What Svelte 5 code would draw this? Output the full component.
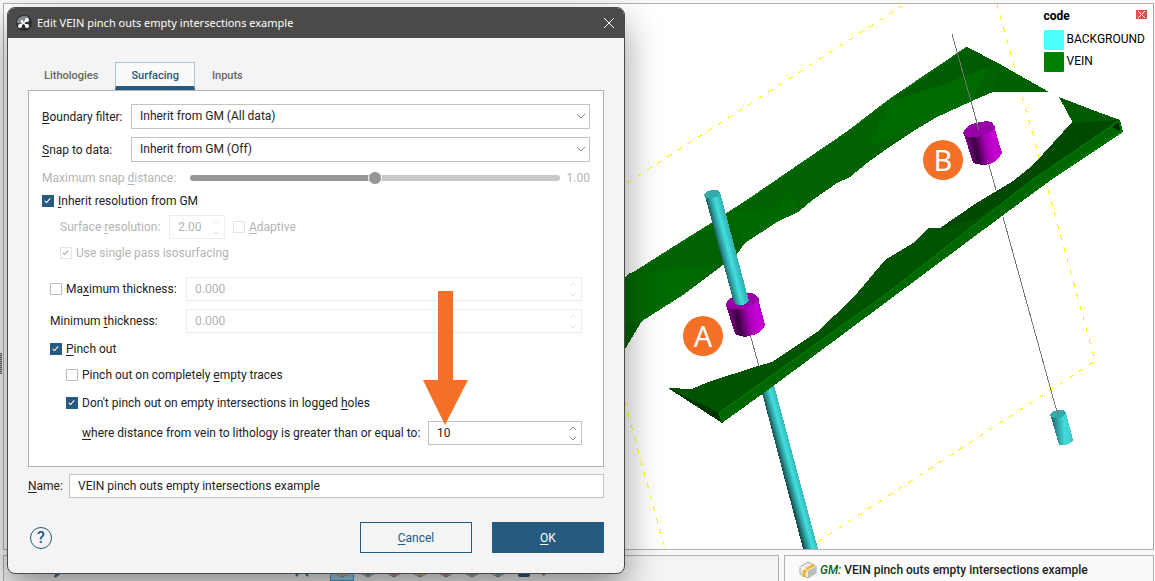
<!--
  VeinEditor: 3D scene view with the vein settings dialog open over it.
-->
<script>
  let boundaryFilter = $state("all");
  let snapToData = $state("off");
  let snapDistance = $state(50);
  let inheritResolution = $state(true);
  let adaptive = $state(false);
  let singlePass = $state(true);
  let limitThickness = $state(false);
  let pinchOut = $state(true);
  let emptyTraces = $state(false);
  let keepLogged = $state(true);
  let distance = $state("10");
  let name = $state("VEIN pinch outs empty intersections example");

  const tabs = ["Lithologies", "Surfacing", "Inputs"];
  let activeTab = $state("Surfacing");

  const legend = [
    { label: "BACKGROUND", color: "#4dffff" },
    { label: "VEIN", color: "#008000" },
  ];

  // top face colours of the toolbar cubes
  const cubes = ["#e0b030", "#4a90b8", "#d9534f", "#e0b030", "#d9534f", "#5aa88a", "#4a90b8"];
</script>

{#snippet spinner(id, value, disabled)}
  <span class="spin" class:disabled>
    <input {id} type="text" inputmode="decimal" {value} {disabled} />
    <span class="steps">
      <button type="button" aria-label="Increase" {disabled}>
        <svg viewBox="0 0 8 5" width="8" height="5"><path d="M1 4l3-3 3 3" /></svg>
      </button>
      <button type="button" aria-label="Decrease" {disabled}>
        <svg viewBox="0 0 8 5" width="8" height="5"><path d="M1 1l3 3 3-3" /></svg>
      </button>
    </span>
  </span>
{/snippet}

<main class="app">
  <section class="scene">
    <svg class="view" viewBox="4 4 1149 545" preserveAspectRatio="xMinYMin slice" aria-hidden="true">
      <defs>
        <linearGradient id="cyan" x1="0" y1="0.1" x2="1" y2="0">
          <stop offset="0" stop-color="#1c6060" />
          <stop offset="0.2" stop-color="#2a9292" />
          <stop offset="0.55" stop-color="#41d9d9" />
          <stop offset="0.8" stop-color="#3fd3d3" />
          <stop offset="1" stop-color="#2fa0a0" />
        </linearGradient>
        <linearGradient id="pole" gradientUnits="userSpaceOnUse" x1="706" y1="198" x2="720" y2="194.4">
          <stop offset="0" stop-color="#1c6060" />
          <stop offset="0.3" stop-color="#2fa8a8" />
          <stop offset="0.6" stop-color="#43dede" />
          <stop offset="1" stop-color="#34b4b4" />
        </linearGradient>
        <linearGradient id="poleLow" gradientUnits="userSpaceOnUse" x1="761" y1="391" x2="775" y2="387.2">
          <stop offset="0" stop-color="#164c4c" />
          <stop offset="0.3" stop-color="#2c9c9c" />
          <stop offset="0.6" stop-color="#43dede" />
          <stop offset="1" stop-color="#34b4b4" />
        </linearGradient>
        <linearGradient id="purple" x1="0" y1="0.2" x2="1" y2="0">
          <stop offset="0.08" stop-color="#6a0072" />
          <stop offset="0.22" stop-color="#3a0040" />
          <stop offset="0.5" stop-color="#a800b6" />
          <stop offset="0.72" stop-color="#c800d8" />
          <stop offset="1" stop-color="#a000ae" />
        </linearGradient>
      </defs>

      <g shape-rendering="crispEdges">
        <g class="bounds">
          <path d="M627 183L902 6" />
          <path d="M997 4L1095 361L816 543" />
          <path d="M625 402L665 549" />
        </g>

        <!-- upper vein surface -->
        <path
          fill="#006200"
          d="M620 282L630 274L672 248L712 223L749 199L800 164L847 132L890 99L967 47L998 63L1049 92H993L972 101L935 118L912 132L885 150L867 163L850 177L837 183L814 199L798 212L777 222L755 235L745 243L737 254L723 265L683 295L642 321L625 349L620 354Z"
        />
        <path fill="#006a00" d="M630 273L700 268L722 262L683 295L642 321L620 325V281Z" />
        <path fill="#006800" d="M727 213L780 207L790 186L798 212L777 222L745 243L728 220Z" />
        <path fill="#006a00" d="M890 100L950 80L990 63L972 101L935 118L885 142L868 145Z" />
        <path fill="#005a00" d="M967 47L998 63L945 84L895 99Z" />
        <path fill="#006000" d="M998 63L1049 92H993Z" />
        <path fill="none" stroke="#007a00" d="M625 278L672 248L712 223L749 199L800 164L847 132L890 99L967 47" />

        <path class="trace" d="M750 334L760 370" />
        <path fill="url(#poleLow)" d="M760 385H774L818 549H803Z" />

        <!-- lower vein surface -->
        <path
          fill="#005400"
          d="M668 388L692 389L708 382L758 366L772 362L817 332L853 298L885 260L913 243L928 228H940L975 204L1013 181L1033 165L1073 121L1059 97L1098 112L1120 120L1123 132L1051 180L1002 216L885 303L772 387L722 423Z"
        />
        <path fill="#004900" d="M940 228L975 204L1013 181L1033 165L1073 121L1118 120L1034 180L1003 203L975 219L933 232Z" />
        <path fill="#005a00" d="M1059 97L1098 112L1120 120L1073 123Z" />
        <path fill="#003300" d="M668 388L719 413L722 423Z" />
        <path fill="#006600" d="M719 413L885 295L1032 180L1118 121L1123 132L1051 180L1002 216L885 303L772 387L722 423Z" />
        <path fill="none" stroke="#007c00" d="M722 422L719 413L885 295L1032 180L1119 121L1122 131L1051 179" />
        <path fill="#002800" d="M1112 127L1119 122L1120 131Z" />

        <path class="trace" d="M952 34L996 190M1003 217L1057 412" />

        <!-- intersection A -->
        <path fill="url(#purple)" d="M726 305L735 334Q744 339 753 335Q762 333 765 325L758 298Z" />
        <path fill="#9a00a8" d="M726 304Q728 298 736 296Q748 291 755 294L759 299Q757 304 748 306Q734 312 728 308Z" />
        <path fill="url(#pole)" d="M705 196L734 303Q742 308 749 301L720 192Z" />
        <ellipse cx="712" cy="194" rx="8" ry="4" fill="#34aaaa" transform="rotate(-10 712 194)" />

        <!-- intersection B -->
        <path fill="url(#purple)" d="M964 134L973 163Q982 166 990 164Q998 161 1002 153L994 126Z" />
        <path fill="#9a00a8" d="M963 133Q965 127 972 124Q984 120 992 122L995 127Q991 133 984 135Q971 139 965 136Z" />
        <path class="trace" d="M975 117L979 130" />

        <path fill="url(#cyan)" d="M1051 417L1059 445Q1068 447 1073 440L1066 413Z" />
        <ellipse cx="1058" cy="414" rx="8" ry="4" fill="#34aaaa" transform="rotate(-12 1058 414)" />
        <path stroke="#907070" d="M1057 410V413" />
      </g>

      <g class="badge">
        <circle cx="703" cy="336" r="20" />
        <text x="703" y="347">A</text>
        <circle cx="943" cy="160" r="20" />
        <text x="943" y="171">B</text>
      </g>
    </svg>

    <aside class="legend">
      <header>
        <strong>code</strong>
        <button type="button" aria-label="Close legend">
          <svg viewBox="0 0 11 9" width="11" height="9"><path d="M2 1l7 7M9 1l-7 7" /></svg>
        </button>
      </header>
      <ul>
        {#each legend as item}
          <li><i style:background={item.color}></i>{item.label}</li>
        {/each}
      </ul>
    </aside>
  </section>

  <footer class="bars">
    <div class="toolbar">
      <svg class="pen" viewBox="0 0 20 20" width="20" height="20"><path d="M5 18l3-6 7-8 2 2-7 8z" /></svg>
      <svg class="pen up" viewBox="0 0 20 20" width="20" height="20"><path d="M4 17l6-7 6 7" /></svg>
      <div class="cubes">
        {#each cubes as color, i}
          <span class="tool" class:selected={i === 0}>
            <svg viewBox="0 0 20 20" width="20" height="20">
              <path fill="#e8e8e8" stroke="#808890" d="M2 6l8-4 8 4v8l-8 4-8-4z" />
              <path fill={color} d="M10 9l5 5-5 3-5-3z" />
              <path fill="none" stroke="#808890" d="M10 9v9" />
            </svg>
          </span>
        {/each}
        <span class="tool">
          <svg viewBox="0 0 20 20" width="20" height="20"><rect x="4" y="3" width="12" height="15" rx="2" fill="#255b80" /></svg>
        </span>
        <svg class="pen" viewBox="0 0 20 20" width="20" height="20"><path d="M5 18l3-6 7-8 2 2-7 8z" /></svg>
      </div>
    </div>
    <div class="status">
      <svg viewBox="0 0 18 18" width="18" height="18" aria-hidden="true">
        <path fill="#ececec" stroke="#a8a8a8" d="M1 6l8-5 8 4v7l-8 5-8-4z" />
        <path fill="#bdbdbd" d="M9 9l8-4v7l-8 5z" />
        <path fill="none" stroke="#f5b21a" stroke-width="3" d="M15 4l-7 4-3 3v5" />
        <path fill="none" stroke="#fff" d="M1 6l8 3 8-4" opacity="0.7" />
      </svg>
      <span><em>GM:</em> VEIN pinch outs empty intersections example</span>
    </div>
  </footer>

  <div class="splitter"></div>

  <form class="dialog" aria-label="Edit VEIN" onsubmit={(e) => e.preventDefault()}>
    <header class="titlebar">
      <svg viewBox="0 0 16 16" width="16" height="16" aria-hidden="true">
        <circle cx="8" cy="8" r="8" fill="#2b2d30" />
        <path fill="#85888a" d="M1 8a7 7 0 0 1 12-5L6 9z" />
        <path stroke="#fff" stroke-width="1.5" d="M4 11l8-7M5 6l6 5" />
        <g fill="#fff"><circle cx="4" cy="11" r="2" /><circle cx="11" cy="5" r="2" /><circle cx="11" cy="11" r="2" /><circle cx="6" cy="6" r="1" /></g>
      </svg>
      <h1>Edit VEIN pinch outs empty intersections example</h1>
      <button type="button" aria-label="Close">
        <svg viewBox="0 0 12 12" width="12" height="12"><path d="M1 1l10 10M11 1L1 11" /></svg>
      </button>
    </header>

    <div class="body">
      <nav class="tabs">
        {#each tabs as tab}
          <button type="button" class:active={tab === activeTab} onclick={() => (activeTab = tab)}>{tab}</button>
        {/each}
      </nav>

      <div class="pane">
        <div class="row combo">
          <label for="boundary"><u>B</u>oundary filter:</label>
          <span class="select">
            <select id="boundary" bind:value={boundaryFilter}>
              <option value="all">Inherit from GM (All data)</option>
            </select>
            <svg viewBox="0 0 10 6" width="10" height="6"><path d="M1 1l4 4 4-4" /></svg>
          </span>
        </div>
        <div class="row combo">
          <label for="snap"><u>S</u>nap to data:</label>
          <span class="select">
            <select id="snap" bind:value={snapToData}>
              <option value="off">Inherit from GM (Off)</option>
            </select>
            <svg viewBox="0 0 10 6" width="10" height="6"><path d="M1 1l4 4 4-4" /></svg>
          </span>
        </div>
        <div class="row slider off">
          <label for="maxsnap">Maximum snap <u>d</u>istance:</label>
          <input id="maxsnap" type="range" min="0" max="100" bind:value={snapDistance} disabled />
          <output for="maxsnap">1.00</output>
        </div>

        <label class="check">
          <input type="checkbox" bind:checked={inheritResolution} /><span><u>I</u>nherit resolution from GM</span>
        </label>
        <div class="row resolution off">
          <label for="resolution">Surface <u>r</u>esolution:</label>
          {@render spinner("resolution", "2.00", true)}
          <label class="check">
            <input type="checkbox" bind:checked={adaptive} disabled /><span><u>A</u>daptive</span>
          </label>
        </div>
        <label class="check single off">
          <input type="checkbox" bind:checked={singlePass} disabled /><span>Use single pass isosurfacing</span>
        </label>

        <div class="group">
          <div class="row thickness">
            <label class="check">
              <input type="checkbox" bind:checked={limitThickness} /><span>Ma<u>x</u>imum thickness:</span>
            </label>
            {@render spinner("maxthick", "0.000", true)}
          </div>
          <div class="row thickness">
            <label for="minthick">Minimum <u>t</u>hickness:</label>
            {@render spinner("minthick", "0.000", true)}
          </div>
          <label class="check">
            <input type="checkbox" bind:checked={pinchOut} /><span><u>P</u>inch out</span>
          </label>
          <div class="nested">
            <label class="check">
              <input type="checkbox" bind:checked={emptyTraces} /><span>Pinch out on completely <u>e</u>mpty traces</span>
            </label>
            <label class="check">
              <input type="checkbox" bind:checked={keepLogged} /><span>Don't pinch out on empty intersections in logged <u>h</u>oles</span>
            </label>
            <div class="row distance">
              <label for="distance"><u>w</u>here distance from vein to lithology is greater than or equal to:</label>
              {@render spinner("distance", distance, false)}
            </div>
          </div>
        </div>
      </div>

      <div class="row name">
        <label for="name"><u>N</u>ame:</label>
        <input id="name" type="text" bind:value={name} />
      </div>

      <div class="actions">
        <button type="button" class="help" aria-label="Help">?</button>
        <button type="button" class="btn"><u>C</u>ancel</button>
        <button type="submit" class="btn primary"><u>O</u>K</button>
      </div>
    </div>

    <svg class="pointer" viewBox="0 0 46 134" width="46" height="134" aria-hidden="true">
      <path d="M15 0h15v89h15L22 134 0 89h15z" />
    </svg>
  </form>
</main>

<style>
  :global(body) {
    margin: 0;
    background: #f8f8f8;
  }
  .app {
    --blue: #255b80;
    --line: #c3c3c3;
    --faint: #ececec;
    position: relative;
    box-sizing: border-box;
    min-height: 100vh;
    display: flex;
    flex-direction: column;
    gap: 5px;
    padding: 3px 1px 0 3px;
    overflow: hidden;
    font: 12px/16px Roboto, "Liberation Sans", sans-serif;
    color: #222;
  }
  button, input, select {
    margin: 0;
    padding: 0;
    font: inherit;
    color: inherit;
  }
  u {
    text-decoration-thickness: 1px;
    text-underline-offset: 2px;
    text-decoration-skip-ink: none;
  }

  /* ---- scene ---- */
  .scene {
    position: relative;
    flex: 1;
    background: #fff;
    border: 1px solid #b0b0b0;
    border-right-color: #9aa3ab;
  }
  .view {
    position: absolute;
    inset: 0;
    width: 100%;
    height: 100%;
  }
  .bounds path {
    fill: none;
    stroke: #ffff00;
    stroke-dasharray: 5 7;
  }
  .trace {
    fill: none;
    stroke: #777;
  }
  .badge circle { fill: #f37026; }
  .badge text {
    fill: #fff;
    font: 29px "Noto Sans", sans-serif;
    text-anchor: middle;
  }

  .legend {
    position: absolute;
    top: 4px;
    right: 6px;
    color: #000;
  }
  .legend header {
    display: flex;
    align-items: flex-start;
    justify-content: space-between;
    height: 22px;
  }
  .legend header button {
    display: flex;
    margin-top: 2px;
    border: 0;
    background: #d9534f;
  }
  .legend header path {
    stroke: #fff;
  }
  .legend ul {
    display: flex;
    flex-direction: column;
    gap: 2px;
    margin: 0;
    padding: 0 2px 0 0;
    list-style: none;
  }
  .legend li {
    display: flex;
    gap: 3px;
    line-height: 18px;
  }
  .legend i {
    width: 20px;
    height: 20px;
    border-radius: 1px;
  }

  /* ---- bottom bars ---- */
  .bars {
    display: grid;
    grid-template-columns: 776fr 370fr;
    gap: 5px;
    height: 26px;
  }
  .toolbar, .status {
    box-sizing: border-box;
    display: flex;
    align-items: center;
    border: 1px solid #b0b0b0;
    border-bottom: 0;
    background: #fafafa;
  }
  .toolbar {
    padding-left: 46px;
    background: #f4f4f4;
  }
  .cubes {
    display: flex;
    gap: 2px;
    margin-left: 18px;
  }
  .tool {
    padding: 2px;
  }
  .tool.selected {
    background: #9fd0ea;
    box-shadow: inset 0 0 0 1px #3aa0d0;
  }
  .tool svg { display: block; }
  .pen path {
    fill: none;
    stroke: #3f6f90;
    stroke-width: 2;
  }
  .pen.up { margin-left: 222px; }
  .status {
    gap: 3px;
    padding: 3px 0 0 14px;
    font-weight: 500;
  }
  .status em { color: #106010; }

  .splitter {
    position: absolute;
    left: 0;
    top: 353px;
    width: 2px;
    height: 21px;
    background: repeating-linear-gradient(#666 0 1px, #bbb 1px 2px);
  }

  /* ---- dialog window ---- */
  .dialog {
    position: absolute;
    left: 7px;
    top: 7px;
    box-sizing: border-box;
    width: 618px;
    border: 1px solid #4c4a48;
    border-radius: 8px;
    background: #f4f4f4;
    box-shadow: 0 16px 36px rgba(0, 0, 0, 0.42);
  }
  .titlebar {
    display: flex;
    align-items: center;
    gap: 5px;
    height: 30px;
    padding: 0 9px 0 8px;
    border-radius: 7px 7px 0 0;
    background: #4c4a48;
    color: #fff;
  }
  .titlebar h1 {
    flex: 1;
    margin: 0;
    font: 11px/16px "Noto Sans", sans-serif;
  }
  .titlebar svg { fill: none; }
  .titlebar button {
    display: flex;
    border: 0;
    background: none;
  }
  .titlebar button path {
    stroke: #fff;
  }
  .body {
    padding: 24px 20px 20px;
  }

  .tabs {
    display: flex;
    gap: 1px;
    height: 28px;
  }
  .tabs button {
    box-sizing: border-box;
    padding: 3px 15px 0;
    border: 1px solid transparent;
    border-bottom: 4px solid transparent;
    background: none;
    color: #666;
    font-size: 11px;
    font-weight: 500;
  }
  .tabs button.active {
    border-color: #b0c4d0;
    border-bottom-color: var(--blue);
    background: #fafafa;
    color: var(--blue);
  }

  .pane {
    display: flex;
    flex-direction: column;
    padding: 13px 13px 21px;
    border: 1px solid #b0b0b0;
    background: #fff;
  }
  .row {
    display: flex;
    align-items: center;
  }
  .off { color: #b4b4b4; }

  .combo { margin-bottom: 8px; }
  .combo label { width: 89px; }
  .select {
    position: relative;
    flex: 1;
    display: flex;
  }
  .select select {
    flex: 1;
    height: 25px;
    padding: 0 8px 2px;
    border: 1px solid var(--line);
    border-radius: 0;
    background: #fff;
    appearance: none;
  }
  .select svg {
    position: absolute;
    right: 4px;
    top: 9px;
    fill: none;
    stroke: #888;
    pointer-events: none;
  }

  .slider {
    height: 16px;
    margin-bottom: 7px;
  }
  .slider label { width: 148px; }
  .slider output {
    width: 30px;
    text-align: right;
  }
  .slider input {
    flex: 1;
    min-width: 0;
    height: 6px;
    border-radius: 3px;
    background: linear-gradient(90deg, #969696 50%, #c8c8c8 50%);
    appearance: none;
  }
  .slider input::-webkit-slider-thumb {
    width: 14px;
    height: 14px;
    border: 1px solid #fff;
    border-radius: 50%;
    background: #969696;
    appearance: none;
  }

  .check {
    display: flex;
    align-items: center;
    gap: 4px;
    height: 16px;
  }
  .check input {
    position: relative;
    box-sizing: border-box;
    width: 12px;
    height: 12px;
    border: 1px solid #bbb;
    background: #fff;
    appearance: none;
  }
  .check input:checked {
    border-color: var(--blue);
    background: var(--blue);
  }
  .check input:disabled {
    border-color: #e4e4e4;
    background: #fff;
  }
  .check input:checked::after {
    content: "";
    position: absolute;
    left: 3px;
    top: 1px;
    width: 2px;
    height: 5px;
    border: solid #fff;
    border-width: 0 1px 1px 0;
    transform: rotate(42deg);
  }
  .check input:disabled::after { border-color: #aaa; }

  .spin {
    box-sizing: border-box;
    display: flex;
    flex: 1;
    height: 24px;
    border: 1px solid var(--line);
    background: #fff;
  }
  .spin input {
    flex: 1;
    width: 0;
    min-width: 0;
    padding-left: 8px;
    border: 0;
    background: none;
  }
  .steps {
    display: flex;
    flex-direction: column;
    justify-content: center;
    gap: 5px;
    width: 16px;
  }
  .steps button {
    display: flex;
    justify-content: center;
    border: 0;
    background: none;
  }
  .steps path {
    fill: none;
    stroke: #8a8a8a;
  }
  .spin.disabled {
    border-color: var(--faint);
    color: #b4b4b4;
  }
  .spin.disabled path { stroke: #e4e4e4; }

  .resolution {
    margin: 6px 0 6px 18px;
  }
  .resolution > label:first-child { width: 109px; }
  .resolution .spin { flex: 0 0 56px; }
  .resolution .check { margin-left: 8px; }
  .single { margin-left: 18px; }

  .group {
    display: flex;
    flex-direction: column;
    gap: 8px;
    padding: 16px 8px 0;
  }
  .thickness > label { width: 136px; }
  .nested {
    display: flex;
    flex-direction: column;
    gap: 12px;
    padding: 2px 0 0 16px;
  }
  .distance {
    margin-top: -2px;
    padding-left: 16px;
  }
  .distance .spin { flex: 0 0 154px; }
  .distance label { flex: 1; }

  .name {
    margin-top: 7px;
  }
  .name label { width: 41px; }
  .name input {
    box-sizing: border-box;
    flex: 1;
    height: 24px;
    padding: 0 8px;
    border: 1px solid var(--line);
    background: #fff;
  }

  .actions {
    display: flex;
    align-items: center;
    gap: 20px;
    margin-top: 24px;
  }
  .help {
    box-sizing: border-box;
    width: 22px;
    height: 22px;
    margin: 0 auto 0 2px;
    border: 1px solid var(--blue);
    border-radius: 50%;
    background: none;
    color: var(--blue);
    font-size: 16px;
    font-weight: 500;
    line-height: 20px;
  }
  .btn {
    width: 112px;
    height: 31px;
    border: 1px solid var(--blue);
    background: none;
    color: var(--blue);
  }
  .btn.primary {
    background: var(--blue);
    color: #fff;
  }

  .pointer {
    position: absolute;
    left: 415px;
    top: 283px;
    fill: #f37026;
    pointer-events: none;
  }
</style>
